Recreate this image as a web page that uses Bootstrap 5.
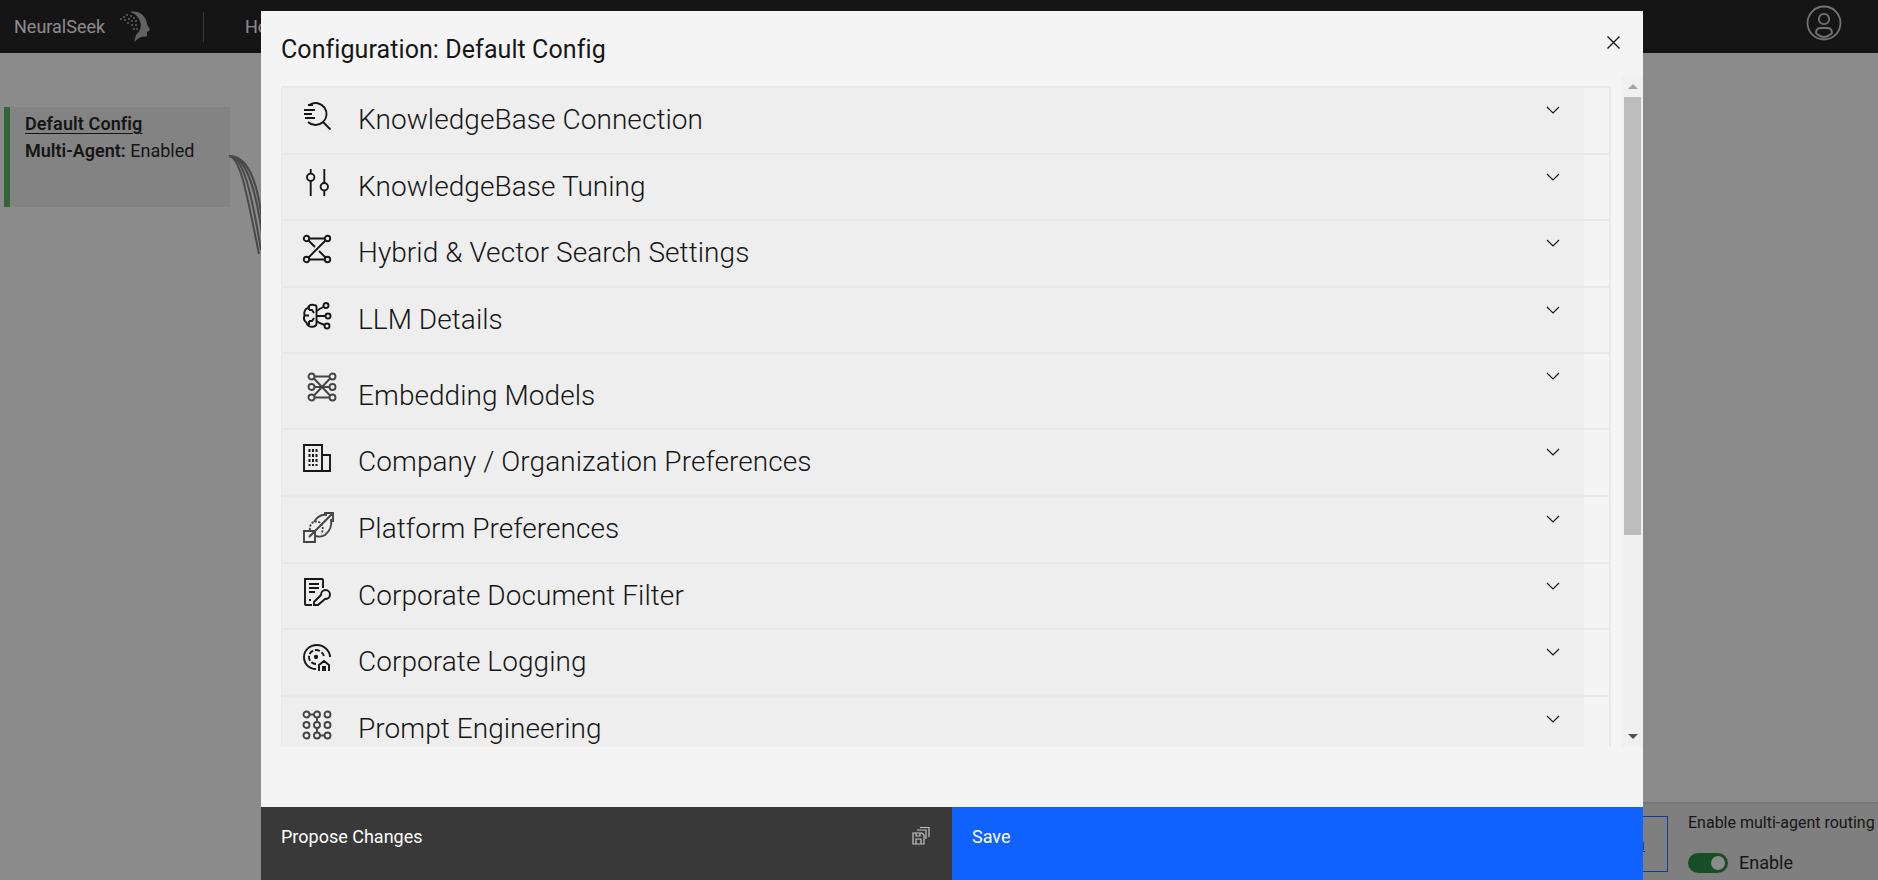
<!DOCTYPE html>
<html lang="en">
<head>
  <meta charset="UTF-8">
  <meta name="viewport" content="width=device-width, initial-scale=1">
  <title>NeuralSeek - Configuration</title>
  <link href="https://cdn.jsdelivr.net/npm/bootstrap@5.3.0/dist/css/bootstrap.min.css" rel="stylesheet">
  <style>
    html, body { height: 880px; overflow: hidden; }
    body { background: #f4f4f4; font-family: Roboto, "Liberation Sans", sans-serif; color: #161616; }

    .top-bar { height: 53px; background: #161616; color: #f4f4f4; }
    .brand-name { width: 120px; padding-left: 14px; font-size: 18px; }
    .brand-div { width: 1px; height: 30px; background: #5a5a5a; margin-left: 52px; margin-right: 41px; }
    .nav-home { font-size: 18px; color: #f4f4f4; }
    .avatar { position: absolute; top: 5px; right: 36px; }

    .flow-card { position: absolute; left: 4px; top: 107px; width: 226px; height: 100px; background: #e4e4e4; border-left: 6px solid #4fae55; padding: 3px 15px; font-size: 18px; line-height: 27px; }
    .flow-card-title { font-weight: 600; text-decoration: underline; text-underline-offset: 3px; letter-spacing: .1px; }
    .flow-lines { position: absolute; left: 229px; top: 150px; }

    .foot-strip { position: absolute; left: 300px; right: 0; top: 802px; height: 78px; background: #dedede; border-top: 2px solid #cdcdcd; }
    .route-btn { width: 330px; height: 56px; margin-top: 12px; border: 1px solid #0f62fe; color: #0f62fe; text-decoration: underline; text-align: right; line-height: 54px; padding-right: 22px; font-size: 18px; }
    .route-box { width: 190px; margin-left: 20px; margin-top: 7px; font-size: 16px; white-space: nowrap; }
    .route-row { margin-top: 14px; font-size: 18px; gap: 11px; }
    .route-toggle { width: 40px; height: 20px; background: #198038; border-radius: 10px; position: relative; }
    .route-toggle::after { content: ""; position: absolute; right: 3px; top: 3px; width: 14px; height: 14px; border-radius: 50%; background: #f4f4f4; }

    .page-dim { position: fixed; inset: 0; background: rgba(22, 22, 22, .47); }

    .cfg-modal { position: fixed; left: 261px; top: 11px; width: 1382px; height: 869px; background: #f4f4f4; }
    .cfg-title { height: 73px; padding: 20px 0 0 20px; font-size: 25px; line-height: 38px; letter-spacing: .08px; }
    .cfg-close { position: absolute; top: 25px; right: 23px; background: none; border: 0; padding: 0; line-height: 0; }
    .cfg-body { height: 663px; padding-left: 20px; }
    .cfg-list { width: 1330px; height: 661px; margin-top: 2px; overflow: hidden; border-right: 2px solid #e8e8e8; border-left: 1px solid #e8e8e8; }
    .cfg-item { height: 66.6px; border-top: 2px solid #e8e8e8; }
    .cfg-item-tall { height: 76px; }
    .cfg-head { height: 100%; width: 1302px; background: #eeeeee; padding-left: 21px; }
    .cfg-icon { width: 28px; flex: none; margin-top: 14px; margin-right: 27px; }
    .cfg-icon svg { display: block; overflow: visible; }
    .cfg-name { flex: 1; margin-top: 12px; font-size: 28px; line-height: 40px; font-weight: 300; letter-spacing: .06px; white-space: nowrap; }
    .cfg-chevron { margin: 18px 24px 0 0; flex: none; }
    .cfg-item-tall .cfg-icon { margin-top: 19px; }
    .cfg-item-tall .cfg-icon svg { margin-left: 5px; }
    .cfg-item-tall .cfg-name { margin-top: 22px; }

    .bar-col { width: 21px; margin-left: 11px; margin-top: -8px; height: 671px; background: #f0f0f0; }
    .bar-arrow { height: 21px; }
    .bar-thumb { height: 438px; margin: 0 2px; background: #bdbdbd; }
    .bar-gap { flex: 1; }

    .cfg-foot { position: absolute; left: 0; right: 0; top: 796px; height: 73px; color: #fff; font-size: 18px; line-height: 24px; }
    .foot-propose { width: 691px; background: #393939; padding: 18px 21px 0 20px; }
    .foot-save { flex: 1; background: #0f62fe; padding: 18px 0 0 20px; }
  </style>
</head>
<body>

<nav class="top-bar d-flex align-items-center">
  <span class="brand-name">NeuralSeek</span>
  <svg width="31" height="32" viewBox="0 0 31 32">
    <path d="M10 1C18-1 26 4 27 13l3 6-3 2v4c0 1-5 0-8 2l-5 4 2-7c4-4 6-8 4-14-2-5-6-8-10-9z" fill="#a6a6a6"/>
    <g fill="#a6a6a6">
      <circle cx="1" cy="8" r=".9"/><circle cx="4" cy="6" r="1"/><circle cx="7" cy="4" r="1"/><circle cx="11" cy="5" r="1"/>
      <circle cx="14" cy="7" r="1"/><circle cx="5" cy="9" r="1"/><circle cx="9" cy="8" r="1"/><circle cx="12" cy="10" r="1"/>
      <circle cx="16" cy="10" r="1"/><circle cx="8" cy="12" r="1"/><circle cx="12" cy="14" r="1"/><circle cx="16" cy="14" r="1"/>
      <circle cx="14" cy="18" r="1"/><circle cx="17" cy="18" r="1"/>
    </g>
  </svg>
  <span class="brand-div"></span>
  <a class="nav-home text-decoration-none" href="#">Home</a>
  <svg class="avatar" width="36" height="36" viewBox="0 0 36 36" fill="none" stroke="#c6c6c6" stroke-width="1.8">
    <circle cx="18" cy="18" r="16.5"/>
    <circle cx="18" cy="14" r="5.2"/>
    <path d="M10 28c0-3 2-5 5-5h6c3 0 5 2 5 5-2 2-5 4-8 4s-6-2-8-4z"/>
  </svg>
</nav>

<div class="flow-card">
  <div class="flow-card-title">Default Config</div>
  <div><strong class="fw-semibold">Multi-Agent:</strong> Enabled</div>
</div>
<svg class="flow-lines" width="34" height="105" viewBox="0 0 34 105" fill="none" stroke="#777" stroke-width="2">
  <path d="M0 6C14 6 22 40 32 100"/>
  <path d="M0 6C16 6 26 34 33 84"/>
  <path d="M0 6C12 8 18 46 30 104"/>
  <path d="M0 6C18 6 28 28 33 70"/>
</svg>

<div class="foot-strip d-flex justify-content-end">
  <div class="route-btn">Add Configuration</div>
  <div class="route-box">
    <div>Enable multi-agent routing</div>
    <div class="route-row d-flex align-items-center">
      <span class="route-toggle"></span>
      <span>Enable</span>
    </div>
  </div>
</div>

<div class="page-dim"></div>

<div class="cfg-modal">
  <div class="cfg-title">Configuration: Default Config</div>
  <button class="cfg-close" type="button" aria-label="Close">
    <svg width="13" height="13" viewBox="0 0 13 13" stroke="#161616" stroke-width="1.4"><path d="M.5.5l12 12M12.5.5l-12 12"/></svg>
  </button>

  <div class="cfg-body d-flex">
    <div class="cfg-list">

      <div class="cfg-item">
        <div class="cfg-head d-flex align-items-start">
          <span class="cfg-icon"><svg width="28" height="28" viewBox="0 0 28 28" fill="none" stroke="#161616" stroke-width="1.9"><path d="M7 2.500A11 11 0 1 1 5 20M19.500 19.500L27.500 27.500"/><path d="M5 3h5M1 8h11M1 12h8M2 16h10"/></svg></span>
          <span class="cfg-name">KnowledgeBase Connection</span>
          <svg class="cfg-chevron" width="14" height="8" viewBox="0 0 14 8" fill="none" stroke="#161616" stroke-width="1.2"><path d="M1 1l6 6 6-6"/></svg>
        </div>
      </div>

      <div class="cfg-item">
        <div class="cfg-head d-flex align-items-start">
          <span class="cfg-icon"><svg width="28" height="28" viewBox="0 0 28 28" fill="none" stroke="#161616" stroke-width="1.9"><path d="M7.700 0v4.500M7.700 12v15M21.300 0v14M21.300 21.500V27"/><circle cx="7.700" cy="8.300" r="3.700"/><circle cx="21.300" cy="17.700" r="3.700"/></svg></span>
          <span class="cfg-name">KnowledgeBase Tuning</span>
          <svg class="cfg-chevron" width="14" height="8" viewBox="0 0 14 8" fill="none" stroke="#161616" stroke-width="1.2"><path d="M1 1l6 6 6-6"/></svg>
        </div>
      </div>

      <div class="cfg-item">
        <div class="cfg-head d-flex align-items-start">
          <span class="cfg-icon"><svg width="28" height="28" viewBox="0 0 28 28" fill="none" stroke="#161616" stroke-width="1.9"><circle cx="3.500" cy="3.500" r="2.700"/><circle cx="24.500" cy="3.500" r="2.700"/><circle cx="3.500" cy="24.500" r="2.700"/><circle cx="24.500" cy="24.500" r="2.700"/><path d="M6.200 3.500h15.600M6.200 24.500h15.600M22.500 5.500l-17 17M5.500 5.500l6.500 6.500M16 16l6.500 6.500"/></svg></span>
          <span class="cfg-name">Hybrid &amp; Vector Search Settings</span>
          <svg class="cfg-chevron" width="14" height="8" viewBox="0 0 14 8" fill="none" stroke="#161616" stroke-width="1.2"><path d="M1 1l6 6 6-6"/></svg>
        </div>
      </div>

      <div class="cfg-item">
        <div class="cfg-head d-flex align-items-start">
          <span class="cfg-icon"><svg width="28" height="28" viewBox="0 0 28 28" fill="none" stroke="#161616" stroke-width="1.900"><path d="M11 3C8 2 5.500 3.500 5 6 2 7 .8 10 1.500 13 .5 16 1 19 3.500 20.500c.5 3 3 5 7.500 4 1.500-.5 2.500-1.500 2.500-3V5c0-1-1-2-2.500-2z"/><path d="M6 8h3l2 3M1.500 13.500H6M6 19h3l2-3M13.500 14h9M13.500 9l3-2 4-2M13.500 19l3 2 5 2M6 4v4M6 19v4"/><circle cx="23" cy="3.500" r="2.500"/><circle cx="25" cy="14" r="2.500"/><circle cx="24" cy="24" r="2.500"/></svg></span>
          <span class="cfg-name">LLM Details</span>
          <svg class="cfg-chevron" width="14" height="8" viewBox="0 0 14 8" fill="none" stroke="#161616" stroke-width="1.2"><path d="M1 1l6 6 6-6"/></svg>
        </div>
      </div>

      <div class="cfg-item cfg-item-tall">
        <div class="cfg-head d-flex align-items-start">
          <span class="cfg-icon"><svg width="28" height="28" viewBox="0 0 28 28" fill="none" stroke="#444" stroke-width="1.900"><circle cx="3.500" cy="3.500" r="3"/><circle cx="24.500" cy="3.500" r="3"/><circle cx="3.500" cy="24.500" r="3"/><circle cx="24.500" cy="24.500" r="3"/><circle cx="3.500" cy="14" r="3"/><circle cx="24.500" cy="14" r="3"/><path d="M6.500 3.500h15M6.500 24.500h15M6 5.500l16 17M22 5.500L6 22.500M6.500 14h15"/></svg></span>
          <span class="cfg-name">Embedding Models</span>
          <svg class="cfg-chevron" width="14" height="8" viewBox="0 0 14 8" fill="none" stroke="#161616" stroke-width="1.2"><path d="M1 1l6 6 6-6"/></svg>
        </div>
      </div>

      <div class="cfg-item">
        <div class="cfg-head d-flex align-items-start">
          <span class="cfg-icon"><svg width="28" height="28" viewBox="0 0 28 28" fill="none" stroke="#161616" stroke-width="1.900"><path d="M1 1h18v26H1zM19 11h8v16h-8"/><path stroke-width="2" stroke-dasharray="3 2" d="M6.500 5v17M10 5v17M13.500 5v17"/></svg></span>
          <span class="cfg-name">Company / Organization Preferences</span>
          <svg class="cfg-chevron" width="14" height="8" viewBox="0 0 14 8" fill="none" stroke="#161616" stroke-width="1.2"><path d="M1 1l6 6 6-6"/></svg>
        </div>
      </div>

      <div class="cfg-item">
        <div class="cfg-head d-flex align-items-start">
          <span class="cfg-icon"><svg width="32" height="32" viewBox="0 0 32 32" fill="none" stroke="#444" stroke-width="1.900"><path d="M1 20h11v11H1zM6 26L30 2M21 2h9v9"/><path d="M11 11C14 6 19 3 24 4M28 8c1 6-1 12-6 16-3 2-6 2-9 1"/><path stroke-dasharray="2 1.500" d="M7 19c-1-6 4-10 9-8 4 2 5 8 2 12"/></svg></span>
          <span class="cfg-name">Platform Preferences</span>
          <svg class="cfg-chevron" width="14" height="8" viewBox="0 0 14 8" fill="none" stroke="#161616" stroke-width="1.2"><path d="M1 1l6 6 6-6"/></svg>
        </div>
      </div>

      <div class="cfg-item">
        <div class="cfg-head d-flex align-items-start">
          <span class="cfg-icon"><svg width="28" height="28" viewBox="0 0 28 28" fill="none" stroke="#161616" stroke-width="1.900"><path d="M9 27H3a1 1 0 0 1-1-1V1h17a1 1 0 0 1 1 1v8"/><path d="M6 6h10M6 10h10M6 14h6M6 22h2"/><path d="M11 27v-3l7-7c0-3 2-5 4.500-5s4.500 2 4.500 4.500-2 4.500-5 4.500l-7 6z"/></svg></span>
          <span class="cfg-name">Corporate Document Filter</span>
          <svg class="cfg-chevron" width="14" height="8" viewBox="0 0 14 8" fill="none" stroke="#161616" stroke-width="1.2"><path d="M1 1l6 6 6-6"/></svg>
        </div>
      </div>

      <div class="cfg-item">
        <div class="cfg-head d-flex align-items-start">
          <span class="cfg-icon"><svg width="28" height="28" viewBox="0 0 28 28" fill="none" stroke="#161616" stroke-width="1.900"><path d="M13 25C6 25 1 20 1 13S7 1 14 1s13 6 13 12"/><path stroke-dasharray="5 2" d="M13 20c-4 0-7-3-7-7s3-7 7-7 7 3 8 6"/><circle cx="13" cy="13" r="1.200" fill="#161616"/><path d="M16 27v-6l5-4 5 4v6M20 27v-4h2v4"/></svg></span>
          <span class="cfg-name">Corporate Logging</span>
          <svg class="cfg-chevron" width="14" height="8" viewBox="0 0 14 8" fill="none" stroke="#161616" stroke-width="1.2"><path d="M1 1l6 6 6-6"/></svg>
        </div>
      </div>

      <div class="cfg-item">
        <div class="cfg-head d-flex align-items-start">
          <span class="cfg-icon"><svg width="28" height="28" viewBox="0 0 28 28" fill="none" stroke="#444" stroke-width="1.900"><circle cx="3.500" cy="3.500" r="3"/><circle cx="14" cy="3.500" r="3"/><circle cx="24.500" cy="3.500" r="3"/><circle cx="3.500" cy="14" r="3"/><circle cx="14" cy="14" r="3"/><circle cx="24.500" cy="14" r="3"/><circle cx="3.500" cy="24.500" r="3"/><circle cx="14" cy="24.500" r="3"/><circle cx="24.500" cy="24.500" r="3"/><path d="M6.500 3.500h4.500M14 6.500V11M14 17v4.500M17 24.500h4.500"/></svg></span>
          <span class="cfg-name">Prompt Engineering</span>
          <svg class="cfg-chevron" width="14" height="8" viewBox="0 0 14 8" fill="none" stroke="#161616" stroke-width="1.2"><path d="M1 1l6 6 6-6"/></svg>
        </div>
      </div>

    </div>

    <div class="bar-col d-flex flex-column">
      <div class="bar-arrow d-flex justify-content-center align-items-center"><svg width="10" height="5" viewBox="0 0 10 5"><path d="M0 5L5 0l5 5z" fill="#a3a3a3"/></svg></div>
      <div class="bar-thumb"></div>
      <div class="bar-gap"></div>
      <div class="bar-arrow d-flex justify-content-center align-items-center"><svg width="10" height="5" viewBox="0 0 10 5"><path d="M0 0l5 5 5-5z" fill="#505050"/></svg></div>
    </div>
  </div>

  <div class="cfg-foot d-flex">
    <div class="foot-propose d-flex justify-content-between">
      <span>Propose Changes</span>
      <svg width="19" height="20" viewBox="0 0 19 20" fill="none" stroke="#c6c6c6" stroke-width="1.200">
        <path d="M1 8h9l2 2v9H1zM4 19v-5h5v5M4 8v3h4V8M5 5h9v9M8 2.500h9V12"/>
      </svg>
    </div>
    <div class="foot-save">Save</div>
  </div>
</div>

<script src="https://cdn.jsdelivr.net/npm/bootstrap@5.3.0/dist/js/bootstrap.bundle.min.js"></script>
</body>
</html>
